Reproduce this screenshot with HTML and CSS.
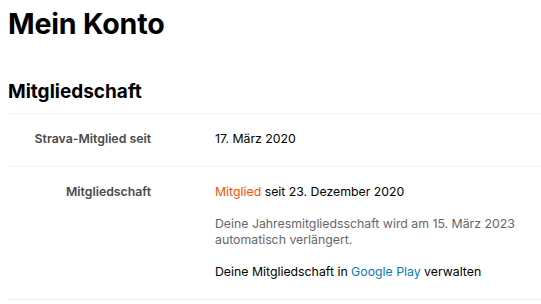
FILE: index.html
```html
<!DOCTYPE html>
<html lang="de">
<head>
    <meta charset="UTF-8">
    <meta name="viewport" content="width=device-width, initial-scale=1.0">
    <title>Mein Konto</title>
    <link rel="stylesheet" href="styles.css">
</head>
<body>
    <h1 class="page-title">Mein Konto</h1>

    <section class="account-section">
        <h2>Mitgliedschaft</h2>
        <div class="rows">
            <div class="row">
                <div class="label">Strava-Mitglied seit</div>
                <div class="value">17. März 2020</div>
            </div>
            <div class="row">
                <div class="label">Mitgliedschaft</div>
                <div class="value">
                    <p><span class="highlight">Mitglied</span> seit 23. Dezember 2020</p>
                    <p class="muted">Deine Jahresmitgliedsschaft wird am 15. März 2023 automatisch verlängert.</p>
                    <p>Deine Mitgliedschaft in <a href="#">Google Play</a> verwalten</p>
                </div>
            </div>
        </div>
    </section>
</body>
</html>
```

FILE: styles.css
```css
body {
    font-family: Inter, "Noto Sans", sans-serif;
    margin: 8px 0 0 8px;
    background-color: white;
    color: #000;
}
.page-title {
    font-size: 28.6px;
    font-weight: 700;
    line-height: 32px;
    margin: 0 0 41px 0;
    letter-spacing: -0.2px;
}
.account-section h2 {
    font-size: 19px;
    font-weight: 700;
    line-height: 22px;
    margin: 0 0 10px 0;
}
.rows {
    border-top: 1px solid #f0f0f0;
}
.row {
    display: grid;
    grid-template-columns: 143px 1fr;
    column-gap: 64px;
    padding: 17px 0 19px 0;
    border-bottom: 1px solid #f0f0f0;
    font-size: 12.3px;
    line-height: 16px;
}
.label {
    text-align: right;
    font-weight: 600;
    color: #494950;
}
.value p {
    margin: 0 0 16px 0;
}
.value p:last-child {
    margin-bottom: 0;
}
.highlight {
    color: #fc5200;
}
.muted {
    color: #66666f;
}
.value a {
    color: #0a7bbf;
    text-decoration: none;
}
```
